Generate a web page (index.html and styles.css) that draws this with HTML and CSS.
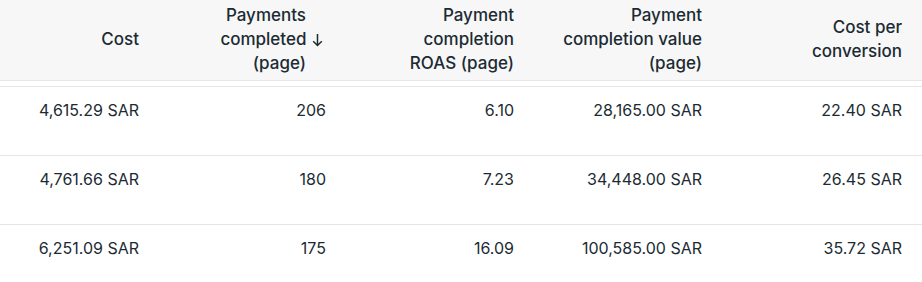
FILE: index.html
```html
<!DOCTYPE html>
<html lang="en">
<head>
<meta charset="utf-8">
<title>Table</title>
<link rel="stylesheet" href="styles.css">
</head>
<body>
<div class="table">
  <div class="head">
    <div class="th"><span class="label">Cost</span></div>
    <div class="th sorted"><span class="label">Payments<br>completed <svg class="arrow" width="11" height="14" viewBox="0 0 11 14" aria-hidden="true"><path d="M5.5 1v11.5M1.2 8.2l4.3 4.3 4.3-4.3" fill="none" stroke="#1c2b33" stroke-width="1.5"/></svg><br>(page)</span></div>
    <div class="th"><span class="label">Payment<br>completion<br>ROAS (page)</span></div>
    <div class="th"><span class="label">Payment<br>completion value<br>(page)</span></div>
    <div class="th"><span class="label">Cost per<br>conversion</span></div>
  </div>
  <div class="body">
    <div class="row">
      <div class="td">4,615.29 SAR</div>
      <div class="td">206</div>
      <div class="td">6.10</div>
      <div class="td">28,165.00 SAR</div>
      <div class="td">22.40 SAR</div>
    </div>
    <div class="row">
      <div class="td">4,761.66 SAR</div>
      <div class="td">180</div>
      <div class="td">7.23</div>
      <div class="td">34,448.00 SAR</div>
      <div class="td">26.45 SAR</div>
    </div>
    <div class="row">
      <div class="td">6,251.09 SAR</div>
      <div class="td">175</div>
      <div class="td">16.09</div>
      <div class="td">100,585.00 SAR</div>
      <div class="td">35.72 SAR</div>
    </div>
  </div>
</div>
</body>
</html>
```
FILE: styles.css
```css
html, body {
  margin: 0;
  padding: 0;
  background: #ffffff;
}
body {
  font-family: Inter, "Noto Sans", "Liberation Sans", sans-serif;
  font-size: 16px;
  color: #1c2b33;
  width: 922px;
  overflow: hidden;
}
.head, .row {
  display: grid;
  grid-template-columns: 159px 187px 188px 188px 200px;
}
.head {
  height: 80px;
  grid-template-rows: 80px;
  background: #f7f7f7;
  border-bottom: 1px solid #e6e6e6;
}
.th {
  display: flex;
  align-items: center;
  justify-content: flex-end;
  text-align: right;
  padding-right: 20px;
  font-size: 17px;
  font-weight: 500;
  line-height: 24px;
  white-space: nowrap;
}
.label {
  display: block;
  margin-top: -3px;
}
.th.sorted {
  padding-right: 40px;
}
.arrow {
  vertical-align: -2px;
  margin-left: 1px;
  margin-right: -17px;
}
.body {
  margin-top: 5px;
}
.row {
  border-top: 1px solid #e6e6e6;
  height: 68px;
}
.td {
  text-align: right;
  padding: 13px 20px 0 0;
  line-height: 20px;
}
```
